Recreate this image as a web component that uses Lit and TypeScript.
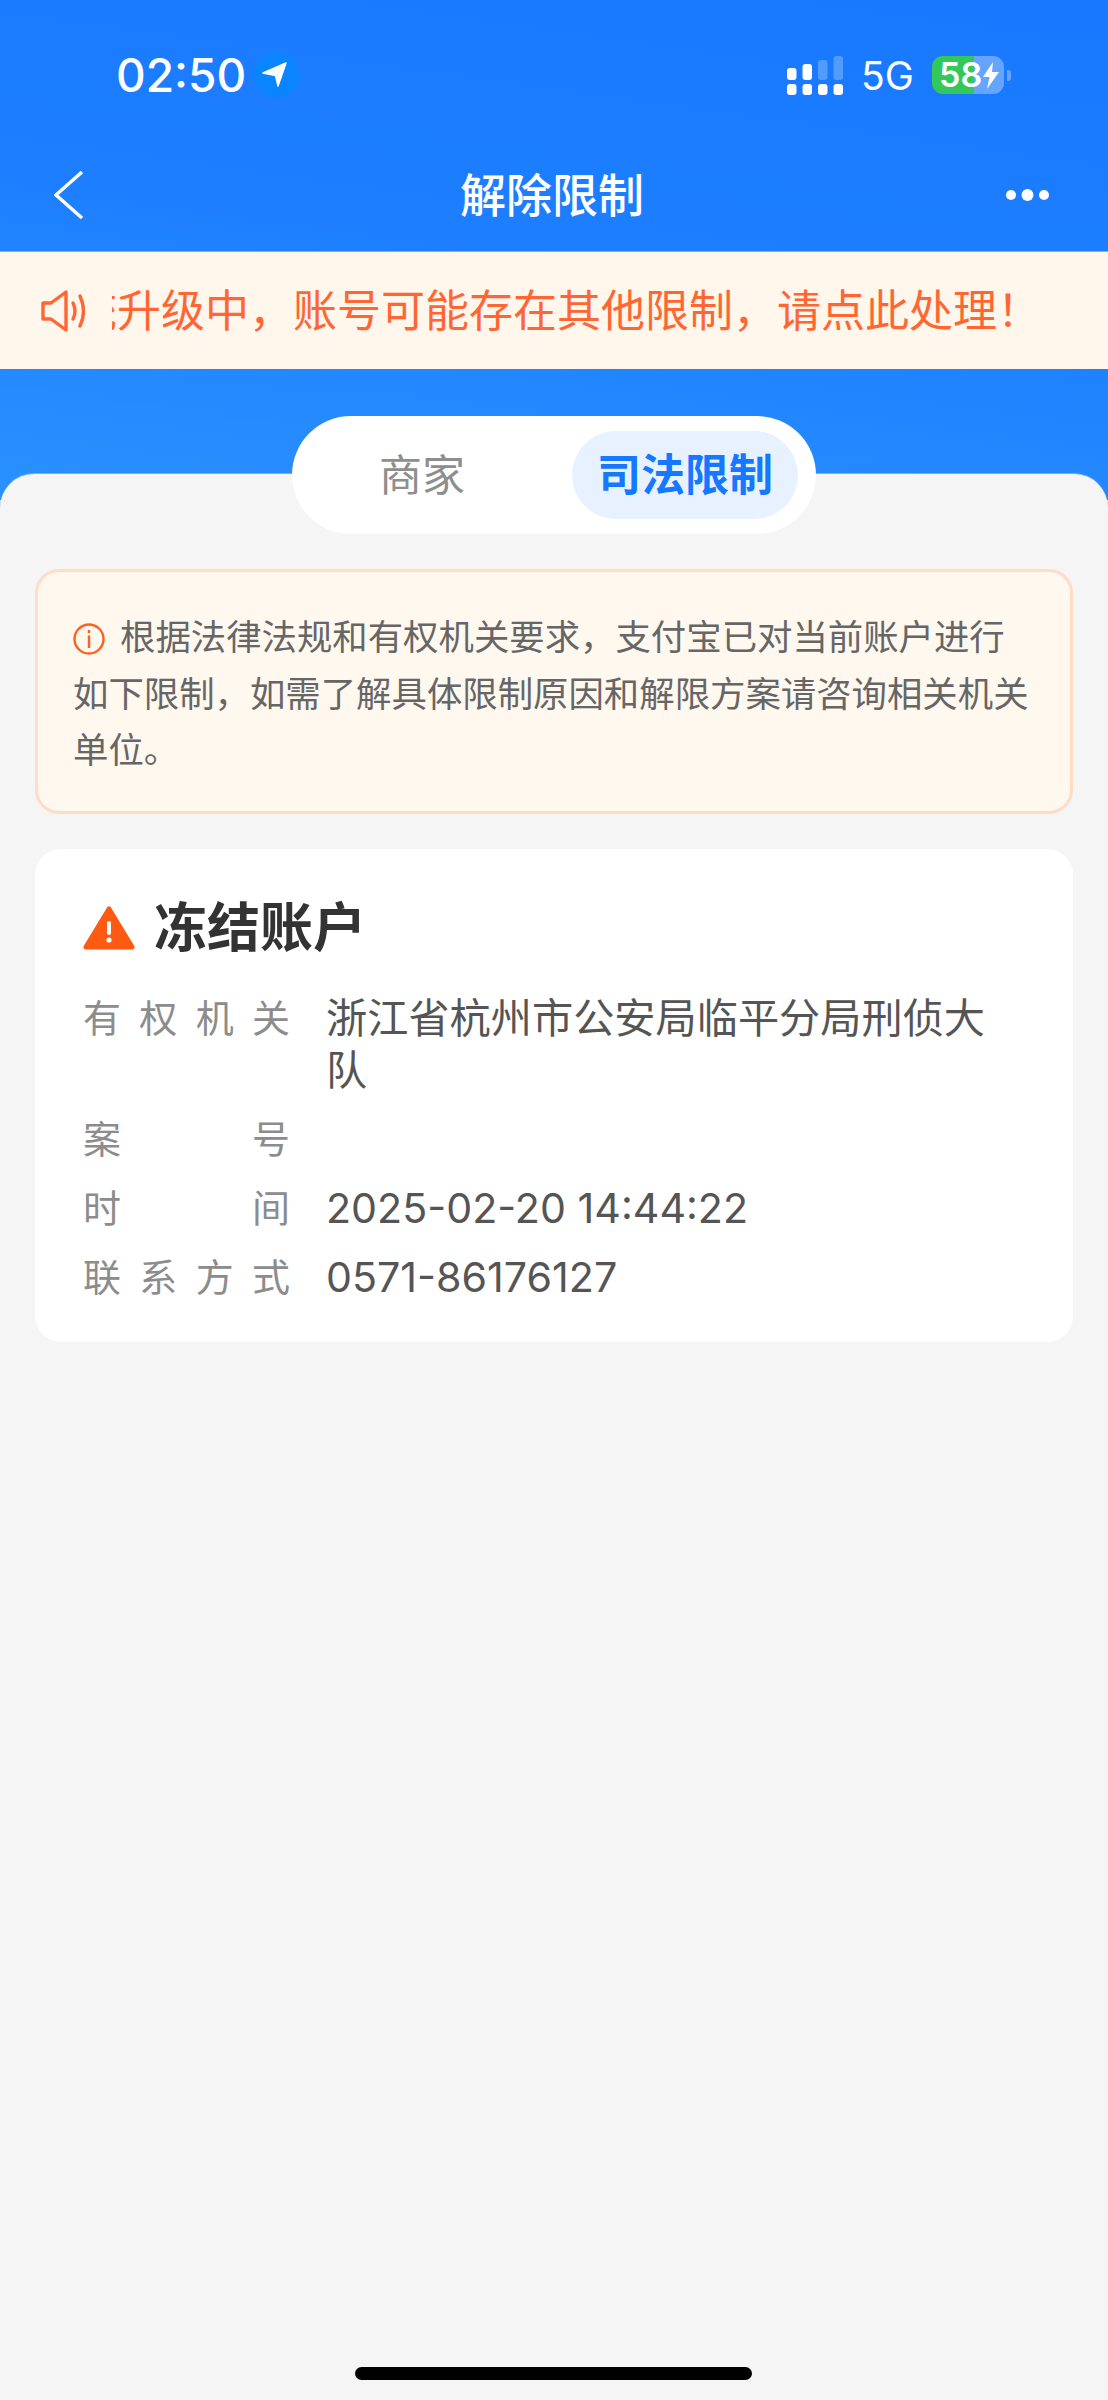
import { LitElement, html, css } from "lit";
import { customElement } from "lit/decorators.js";

const rows: [string, string][] = [
  ["有权机关", "浙江省杭州市公安局临平分局刑侦大队"],
  ["案号", ""],
  ["时间", "2025-02-20 14:44:22"],
  ["联系方式", "0571-86176127"],
];

@customElement("app-root")
export class AppRoot extends LitElement {
  static styles = css`
    :host {
      display: block;
      width: 1108px;
      height: 2400px;
      font-family: Inter, "Noto Sans CJK SC", sans-serif;
      background: #f5f5f5;
      overflow: hidden;
    }
    .page { display: flex; flex-direction: column; height: 2400px;
      background: linear-gradient(188deg, #1878ff 0%, #1d7fff 50%, #2a91ff 100%) top / 100% 500px no-repeat; }
    .status { height: 150px; display: flex; align-items: center; box-sizing: border-box; padding: 0 0 0 116px; }
    .time { color: #fff; font-size: 46px; font-weight: 500; width: 128px; line-height: 1; }
    .loc { margin-left: 9px; }
    .spacer { flex: 1; }
    .signal { margin-right: 17px; display: block; }
    .net { color: #fff; font-size: 39px; line-height: 1; width: 52px; margin-right: 19px; }
    .batt { width: 72px; height: 38px; border-radius: 11px; display: flex; align-items: center; padding-left: 7px; box-sizing: border-box;
      background: linear-gradient(90deg, #34c759 58%, #66a5ff 58%); color: #fff; font-size: 34px; font-weight: 600; line-height: 1; }
    .nub { width: 4px; height: 11px; margin: 0 97px 0 3px; border-radius: 0 3px 3px 0; background: #66a5ff; }
    .nav { height: 102px; box-sizing: border-box; display: flex; align-items: center; justify-content: space-between; padding: 0 58px 12px 54px; }
    .nav h1 { margin: 0 0 0 14px; color: #fff; font-size: 46px; font-weight: 500; line-height: 1; }
    .banner { height: 117px; background: #fff7ec; display: flex; align-items: center; padding-left: 41px; box-shadow: 0 -1px 0 #7db6ff; }
    .clip { margin-left: 27px; width: 950px; overflow: hidden; white-space: nowrap; color: #ff6633; font-size: 44px; line-height: 60px; }
    .clip span { margin-left: -39px; display: inline-block; }
    .tabs { align-self: center; margin-top: 47px; width: 524px; height: 118px; box-sizing: border-box; padding: 15px 18px 15px 0; background: #fff;
      border-radius: 59px; display: flex; align-items: center; justify-content: space-between; position: relative; z-index: 1; }
    .tab { font-size: 43px; color: #8e8e8e; margin-left: 87px; line-height: 1; }
    .tab.on { margin: 0; width: 226px; height: 88px; border-radius: 44px; background: #e7f1ff; color: #1677ff; font-size: 44px; font-weight: 700;
      display: flex; align-items: center; justify-content: center; }
    .sheet { flex: 1; margin-top: -60px; background: #f5f5f5; border-radius: 34px 34px 0 0; box-shadow: 0 -1px 0 #6fb0ff; display: flex; flex-direction: column; align-items: stretch; padding: 95px 35px 0; position: relative; }
    .notice { height: 245px; box-sizing: border-box; border: 3px solid #ffdcc6; border-radius: 24px; background: #fff8ee;
      padding: 38px 36px 0 35px; color: #666; font-size: 35.4px; line-height: 56.6px; }
    .notice svg { vertical-align: -5px; margin-right: 15px; }
    .card { margin-top: 35px; height: 493px; box-sizing: border-box; background: #fff; border-radius: 26px; padding: 51px 48px 0; }
    .title { display: flex; align-items: center; gap: 19px; color: #333; font-size: 53px; font-weight: 700; line-height: 56px; margin-bottom: 36px; }
    .row { display: flex; gap: 36px; font-size: 38px; line-height: 52px; margin-bottom: 17px; }
    .label { width: 207px; flex: none; color: #8c8c8c; text-align: justify; text-align-last: justify; letter-spacing: 0; }
    .value { color: #555; font-size: 41.2px; width: 664px; min-height: 52px; }
    .home { width: 397px; height: 13px; border-radius: 7px; background: #000; position: absolute; left: 355px; bottom: 20px; }
  `;

  render() {
    return html`<div class="page">
      <div class="status">
        <div class="time">02:50</div>
        <svg class="loc" width="46" height="46" viewBox="0 0 46 46">
          <circle cx="23" cy="23" r="23" fill="#0a84ff"/>
          <path d="M10 21 L33 11 L25 34 L22.5 23.5 Z" fill="#fff" stroke="#fff" stroke-width="1.5" stroke-linejoin="round"/>
        </svg>
        <div class="spacer"></div>
        <svg class="signal" width="57" height="39" viewBox="0 0 57 39">
          <rect x="0" y="12" width="9.5" height="12" rx="3" fill="#fff"/>
          <rect x="15.5" y="8" width="9.5" height="16" rx="3" fill="#fff"/>
          <rect x="31" y="4" width="9.5" height="20" rx="3" fill="#fff" fill-opacity=".25"/>
          <rect x="46.5" y="0" width="9.5" height="24" rx="3" fill="#fff" fill-opacity=".25"/>
          <rect x="0" y="28" width="9.5" height="11" rx="3" fill="#fff"/>
          <rect x="15.5" y="28" width="9.5" height="11" rx="3" fill="#fff"/>
          <rect x="31" y="28" width="9.5" height="11" rx="3" fill="#fff"/>
          <rect x="46.5" y="28" width="9.5" height="11" rx="3" fill="#fff"/>
        </svg>
        <div class="net">5G</div>
        <div class="batt"><span>58</span>
          <svg width="18" height="27" viewBox="0 0 18 27"><path d="M11 0 L1 15 H7.5 L5 27 L17 10 H10 Z" fill="#fff"/></svg>
        </div>
        <div class="nub"></div>
      </div>
      <div class="nav">
        <svg width="30" height="48" viewBox="0 0 30 48"><path d="M28 1 L2 24 L28 47" fill="none" stroke="#fff" stroke-width="3.4"/></svg>
        <h1>解除限制</h1>
        <svg width="44" height="12" viewBox="0 0 44 12"><circle cx="5" cy="6" r="5" fill="#fff"/><circle cx="21.5" cy="6" r="6" fill="#fff"/><circle cx="38" cy="6" r="5" fill="#fff"/></svg>
      </div>
      <div class="banner">
        <svg width="44" height="42" viewBox="0 0 44 42" fill="none" stroke="#ff6633" stroke-width="3.4" stroke-linejoin="round" stroke-linecap="round">
          <path d="M2 13 H10 L25 2 V40 L10 29 H2 Z"/>
          <path d="M32 13 Q36 21 32 29"/>
          <path d="M39 6 Q46 21 39 36"/>
        </svg>
        <div class="clip"><span>统升级中，账号可能存在其他限制，请点此处理！</span></div>
      </div>
      <div class="tabs">
        <div class="tab">商家</div>
        <div class="tab on">司法限制</div>
      </div>
      <div class="sheet">
        <div class="notice">
          <svg width="32" height="32" viewBox="0 0 32 32" fill="none" stroke="#ff5f1f" stroke-width="2.4">
            <circle cx="16" cy="16" r="14.5"/>
            <path d="M16 12.5 V25"/><path d="M16 7 V10"/>
          </svg>根据法律法规和有权机关要求，支付宝已对当前账户进行如下限制，如需了解具体限制原因和解限方案请咨询相关机关单位。
        </div>
        <div class="card">
          <div class="title">
            <svg width="52" height="44" viewBox="0 0 52 44">
              <path d="M26 3 L49 41 H3 Z" fill="#ff5a12" stroke="#ff5a12" stroke-width="5" stroke-linejoin="round"/>
              <rect x="24" y="15" width="4" height="14" rx="2" fill="#fff"/><circle cx="26" cy="34" r="2.6" fill="#fff"/>
            </svg>
            <span>冻结账户</span>
          </div>
          ${rows.map(([l, v]) => html`<div class="row"><div class="label">${l.split("").join(" ")}</div><div class="value">${v}</div></div>`)}
        </div>
        <div class="home"></div>
      </div>
    </div>`;
  }
}
